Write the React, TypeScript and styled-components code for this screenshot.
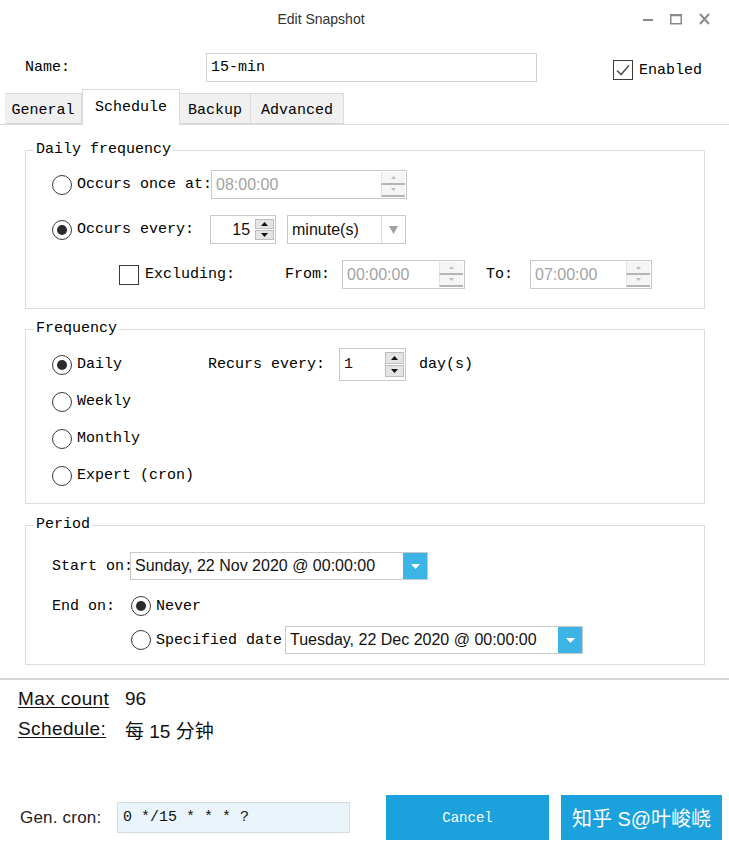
import React from 'react';
import styled, { createGlobalStyle } from 'styled-components';

const MONO = `"Liberation Mono", "DejaVu Sans Mono", "Noto Sans CJK SC", monospace`;
const SANS = `"Liberation Sans", Arial, "Noto Sans CJK SC", sans-serif`;
const CJK = `"Liberation Sans", "Noto Sans CJK SC", sans-serif`;

const GlobalStyle = createGlobalStyle`
  html, body { margin: 0; padding: 0; background: #fff; }
  #root { width: 729px; height: 850px; overflow: hidden; }
  * { box-sizing: border-box; }
`;

const Window = styled.div`
  width: 729px;
  height: 850px;
  background: #fff;
  font-family: ${MONO};
  font-size: 15px;
  color: #000;
  display: flex;
  flex-direction: column;
`;

const TitleBar = styled.div`
  height: 38px;
  display: grid;
  grid-template-columns: 1fr 87px;
  align-items: center;
`;

const Title = styled.div`
  text-align: center;
  font-family: ${SANS};
  font-size: 14px;
  color: #333;
`;

const Controls = styled.div`
  display: flex;
  align-items: center;
  gap: 17px;
  padding-left: 1px;
  color: #8a8a8a;
`;

const NameRow = styled.div`
  margin-top: 15px;
  height: 29px;
  display: flex;
  align-items: center;
  padding-left: 25px;
`;

const NameLabel = styled.span`
  width: 181px;
`;

const TextBox = styled.div<{ $w: number }>`
  width: ${(p) => p.$w}px;
  height: 29px;
  border: 1px solid #d2d2d2;
  display: flex;
  align-items: center;
  padding-left: 4px;
`;

const EnabledWrap = styled.label`
  margin-left: 76px;
  margin-top: 5px;
  display: flex;
  align-items: center;
  gap: 6px;
`;

const CheckBox = styled.span`
  width: 20px;
  height: 20px;
  border: 1.5px solid #3a3a3a;
  display: inline-flex;
  align-items: center;
  justify-content: center;
  flex: none;
`;

const TabStrip = styled.div`
  margin-top: 7px;
  height: 36px;
  display: flex;
  align-items: flex-end;
  padding-left: 5px;
  border-bottom: 1px solid #d9d9d9;
`;

const Tab = styled.div<{ $w: number; $active?: boolean }>`
  width: ${(p) => p.$w}px;
  height: ${(p) => (p.$active ? 36 : 31)}px;
  margin-bottom: ${(p) => (p.$active ? -1 : 0)}px;
  padding-top: ${(p) => (p.$active ? 0 : 3)}px;
  padding-bottom: ${(p) => (p.$active ? 0 : 0)}px;
  background: ${(p) => (p.$active ? '#fff' : '#f0f0f0')};
  border: 1px solid #dadada;
  border-bottom: ${(p) => (p.$active ? 'none' : '1px solid #dadada')};
  border-left: ${(p) => (p.$active ? '1px solid #dadada' : 'none')};
  display: flex;
  align-items: center;
  justify-content: center;
  position: relative;
`;

const Content = styled.div`
  padding: 16px 24px 0 25px;
  display: flex;
  flex-direction: column;
`;

const Group = styled.fieldset<{ $mt?: number }>`
  margin: ${(p) => p.$mt ?? 0}px 0 0 0;
  padding: 0;
  min-width: 0;
  border: 1px solid #dcdcdc;
`;

const Legend = styled.legend`
  margin-left: 8px;
  padding: 0 2px;
  line-height: 18px;
  font-size: 15px;
`;

const GroupBody = styled.div<{ $pt: number; $pb: number; $gap: number }>`
  padding: ${(p) => p.$pt}px 0 ${(p) => p.$pb}px 26px;
  display: flex;
  flex-direction: column;
  gap: ${(p) => p.$gap}px;
`;

const Row = styled.div<{ $h: number; $mt?: number; $pl?: number }>`
  height: ${(p) => p.$h}px;
  margin-top: ${(p) => p.$mt ?? 0}px;
  padding-left: ${(p) => p.$pl ?? 0}px;
  display: flex;
  align-items: center;
  white-space: pre;
`;

const Label = styled.span<{ $w?: number; $ml?: number }>`
  ${(p) => (p.$w ? `width: ${p.$w}px;` : '')}
  margin-left: ${(p) => p.$ml ?? 0}px;
  flex: none;
  white-space: pre;
`;

const RadioCircle = styled.span<{ $on?: boolean }>`
  width: 20px;
  height: 20px;
  border-radius: 50%;
  border: 1.5px solid #3a3a3a;
  display: inline-flex;
  align-items: center;
  justify-content: center;
  flex: none;
  background: #fff;
  &::after {
    content: '';
    width: 10px;
    height: 10px;
    border-radius: 50%;
    background: ${(p) => (p.$on ? '#2b2b2b' : 'transparent')};
  }
`;

const RadioLabel = styled.span`
  margin-left: 5px;
  white-space: pre;
`;

const Field = styled.div<{ $w: number; $h?: number; $ml?: number }>`
  width: ${(p) => p.$w}px;
  height: ${(p) => p.$h ?? 29}px;
  margin-left: ${(p) => p.$ml ?? 0}px;
  border: 1px solid #c9c9c9;
  background: #fff;
  display: flex;
  align-items: stretch;
  flex: none;
`;

const FieldText = styled.span<{ $muted?: boolean; $right?: boolean; $mono?: boolean }>`
  flex: 1;
  display: flex;
  align-items: center;
  justify-content: ${(p) => (p.$right ? 'flex-end' : 'flex-start')};
  padding: 0 ${(p) => (p.$right ? 5 : 0)}px 0 ${(p) => (p.$right ? 0 : 4)}px;
  font-family: ${(p) => (p.$mono ? MONO : SANS)};
  font-size: ${(p) => (p.$mono ? 15 : 16)}px;
  color: ${(p) => (p.$muted ? '#a3a3a3' : '#111')};
  white-space: pre;
  overflow: hidden;
`;

const GraySpin = styled.div`
  width: 24px;
  margin: 1px 1px 1px 0;
  display: flex;
  flex-direction: column;
`;

const GrayHalf = styled.div`
  flex: 1;
  background: #f5f5f5;
  border-bottom: 2px solid #b5b5b5;
  border-left: 1px solid #e3e3e3;
  display: flex;
  align-items: center;
  justify-content: center;
`;

const DarkSpin = styled.div`
  width: 19px;
  margin: 3px 1px 3px 0;
  display: flex;
  flex-direction: column;
  gap: 1px;
`;

const DarkHalf = styled.div`
  flex: 1;
  background: #e4e4e4;
  border: 1px solid #bdbdbd;
  display: flex;
  align-items: center;
  justify-content: center;
`;

const ComboArrow = styled.div`
  width: 24px;
  border-left: 1px solid #dcdcdc;
  display: flex;
  align-items: center;
  justify-content: center;
`;

const BlueArrow = styled.div`
  width: 24px;
  background: #3db4e6;
  display: flex;
  align-items: center;
  justify-content: center;
`;

const Separator = styled.div`
  margin-top: 13px;
  height: 2px;
  background: #d5d5d5;
`;

const Info = styled.div`
  margin-top: 4px;
  padding-left: 18px;
  display: flex;
  flex-direction: column;
`;

const InfoRow = styled.div`
  height: 30px;
  display: flex;
  align-items: center;
`;

const InfoKey = styled.span`
  width: 107px;
  font-family: ${SANS};
  font-size: 19px;
  letter-spacing: 0.4px;
  text-decoration: underline;
  text-underline-offset: 2px;
  color: #111;
`;

const InfoValue = styled.span`
  font-family: ${CJK};
  font-size: 19px;
  color: #111;
`;

const Footer = styled.div`
  margin-top: 51px;
  height: 45px;
  padding-left: 20px;
  display: flex;
  align-items: center;
`;

const FooterLabel = styled.span`
  width: 97px;
  font-family: ${SANS};
  font-size: 17px;
  letter-spacing: 0.2px;
  color: #222;
`;

const CronBox = styled.div`
  width: 233px;
  height: 31px;
  background: #eaf4fb;
  border: 1px solid #d3dde4;
  display: flex;
  align-items: center;
  padding-left: 5px;
  font-family: ${MONO};
  font-size: 15px;
  color: #111;
`;

const Button = styled.div<{ $w: number; $ml: number; $cjk?: boolean }>`
  width: ${(p) => p.$w}px;
  height: 45px;
  margin-left: ${(p) => p.$ml}px;
  background: #1ba1dc;
  color: #fff;
  display: flex;
  align-items: center;
  justify-content: center;
  font-family: ${(p) => (p.$cjk ? CJK : MONO)};
  font-size: ${(p) => (p.$cjk ? 20 : 14)}px;
`;

const Tri = ({ up, color, w = 7, h = 4 }: { up?: boolean; color: string; w?: number; h?: number }) => (
  <svg width={w} height={h} viewBox={`0 0 ${w} ${h}`}>
    <path d={up ? `M0 ${h} L${w / 2} 0 L${w} ${h} Z` : `M0 0 L${w} 0 L${w / 2} ${h} Z`} fill={color} />
  </svg>
);

const Check = () => (
  <svg width="16" height="14" viewBox="0 0 16 14">
    <path d="M2 7.5 L6 11.5 L14 2.5" stroke="#555" strokeWidth="1.6" fill="none" />
  </svg>
);

const Radio = ({ on, children }: { on?: boolean; children: React.ReactNode }) => (
  <>
    <RadioCircle $on={on} />
    <RadioLabel>{children}</RadioLabel>
  </>
);

const TimeField = ({ w, value, ml }: { w: number; value: string; ml?: number }) => (
  <Field $w={w} $ml={ml}>
    <FieldText $muted>{value}</FieldText>
    <GraySpin>
      <GrayHalf>
        <Tri up color="#bdbdbd" w={5} h={3} />
      </GrayHalf>
      <GrayHalf>
        <Tri color="#bdbdbd" w={5} h={3} />
      </GrayHalf>
    </GraySpin>
  </Field>
);

const NumField = ({ w, h, value, ml, right }: { w: number; h?: number; value: string; ml?: number; right?: boolean }) => (
  <Field $w={w} $h={h} $ml={ml}>
    <FieldText $right={right} $mono={!right}>
      {value}
    </FieldText>
    <DarkSpin>
      <DarkHalf>
        <Tri up color="#111" />
      </DarkHalf>
      <DarkHalf>
        <Tri color="#111" />
      </DarkHalf>
    </DarkSpin>
  </Field>
);

const DateField = ({ value, ml }: { value: string; ml?: number }) => (
  <Field $w={298} $h={28} $ml={ml}>
    <FieldText>{value}</FieldText>
    <BlueArrow>
      <Tri color="#fff" w={9} h={5} />
    </BlueArrow>
  </Field>
);

export default function App() {
  return (
    <Window>
      <GlobalStyle />
      <TitleBar>
        <Title>Edit Snapshot</Title>
        <Controls>
          <svg width="10" height="12" viewBox="0 0 10 12">
            <rect x="0" y="6" width="10" height="2" fill="#8a8a8a" />
          </svg>
          <svg width="12" height="12" viewBox="0 0 12 12">
            <rect x="0.75" y="1.75" width="10.5" height="9" fill="none" stroke="#8a8a8a" strokeWidth="1.5" />
            <rect x="0.75" y="1.75" width="10.5" height="1.5" fill="#8a8a8a" />
          </svg>
          <svg width="11" height="12" viewBox="0 0 11 12">
            <path d="M1 1 L10 11 M10 1 L1 11" stroke="#8a8a8a" strokeWidth="2" />
          </svg>
        </Controls>
      </TitleBar>

      <NameRow>
        <NameLabel>Name:</NameLabel>
        <TextBox $w={331}>15-min</TextBox>
        <EnabledWrap>
          <CheckBox>
            <Check />
          </CheckBox>
          Enabled
        </EnabledWrap>
      </NameRow>

      <TabStrip>
        <Tab $w={77}>General</Tab>
        <Tab $w={98} $active>
          Schedule
        </Tab>
        <Tab $w={71}>Backup</Tab>
        <Tab $w={93}>Advanced</Tab>
      </TabStrip>

      <Content>
        <Group>
          <Legend>Daily frequency</Legend>
          <GroupBody $pt={11} $pb={19} $gap={16}>
            <Row $h={29}>
              <Radio>Occurs once at:</Radio>
              <TimeField w={196} value="08:00:00" ml={-1} />
            </Row>
            <Row $h={29}>
              <Radio on>Occurs every:</Radio>
              <NumField w={66} value="15" ml={16} right />
              <Field $w={119} $ml={11}>
                <FieldText>minute(s)</FieldText>
                <ComboArrow>
                  <Tri color="#a0a0a0" w={9} h={8} />
                </ComboArrow>
              </Field>
            </Row>
            <Row $h={29} $pl={67}>
              <CheckBox />
              <Label $ml={6}>Excluding:</Label>
              <Label $ml={50}>From:</Label>
              <TimeField w={123} value="00:00:00" ml={12} />
              <Label $ml={21}>To:</Label>
              <TimeField w={122} value="07:00:00" ml={17} />
            </Row>
          </GroupBody>
        </Group>

        <Group $mt={11}>
          <Legend>Frequency</Legend>
          <GroupBody $pt={8} $pb={9} $gap={0}>
            <Row $h={37}>
              <Radio on>Daily</Radio>
              <Label $ml={86}>Recurs every:</Label>
              <NumField w={67} h={33} value="1" ml={14} />
              <Label $ml={13}>day(s)</Label>
            </Row>
            <Row $h={37}>
              <Radio>Weekly</Radio>
            </Row>
            <Row $h={37}>
              <Radio>Monthly</Radio>
            </Row>
            <Row $h={37}>
              <Radio>Expert (cron)</Radio>
            </Row>
          </GroupBody>
        </Group>

        <Group $mt={12}>
          <Legend>Period</Legend>
          <GroupBody $pt={18} $pb={10} $gap={0}>
            <Row $h={28}>
              <Label $w={78}>Start on:</Label>
              <DateField value="Sunday, 22 Nov 2020 @ 00:00:00" />
            </Row>
            <Row $h={24} $mt={14}>
              <Label $w={79}>End on:</Label>
              <Radio on>Never</Radio>
            </Row>
            <Row $h={28} $mt={8} $pl={79}>
              <Radio>Specified date</Radio>
              <DateField value="Tuesday, 22 Dec 2020 @ 00:00:00" ml={3} />
            </Row>
          </GroupBody>
        </Group>
      </Content>

      <Separator />

      <Info>
        <InfoRow>
          <InfoKey>Max count</InfoKey>
          <InfoValue>96</InfoValue>
        </InfoRow>
        <InfoRow>
          <InfoKey>Schedule:</InfoKey>
          <InfoValue>每 15 分钟</InfoValue>
        </InfoRow>
      </Info>

      <Footer>
        <FooterLabel>Gen. cron:</FooterLabel>
        <CronBox>0 */15 * * * ?</CronBox>
        <Button $w={163} $ml={36}>
          Cancel
        </Button>
        <Button $w={161} $ml={12} $cjk>
          知乎 S@叶峻峣
        </Button>
      </Footer>
    </Window>
  );
}
